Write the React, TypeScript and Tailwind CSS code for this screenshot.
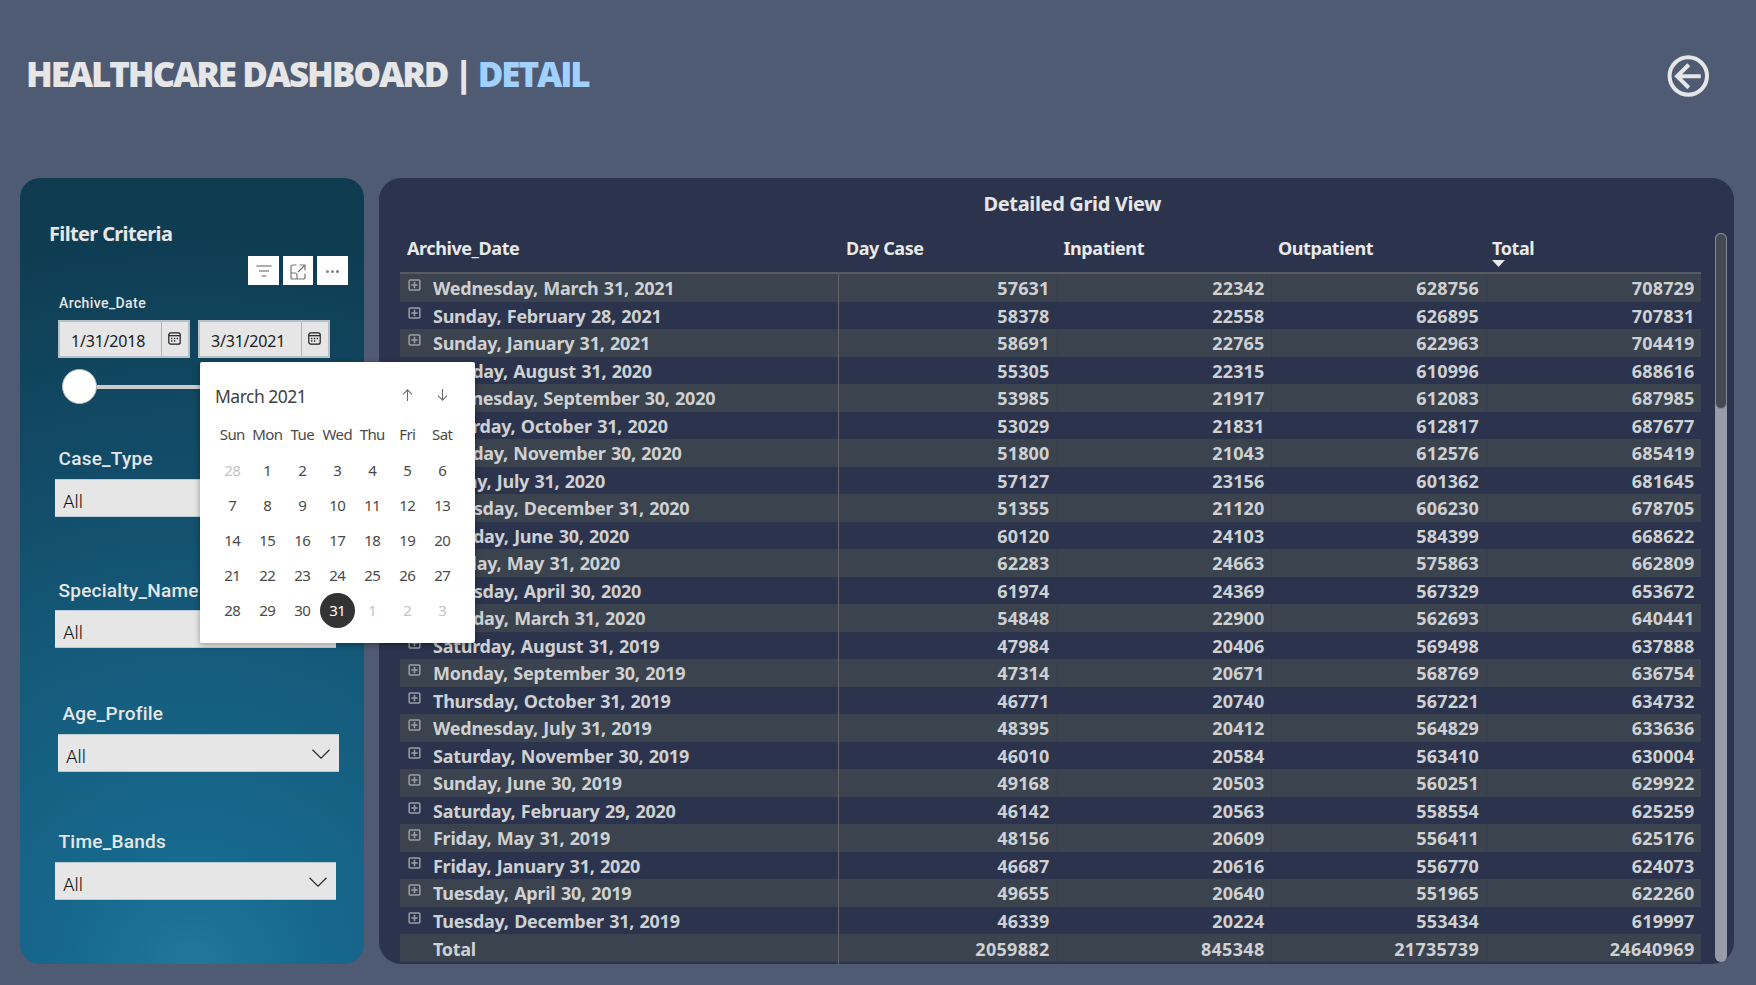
const rows: [string, string, string, string, string][] = [
  ["Wednesday, March 31, 2021", "57631", "22342", "628756", "708729"],
  ["Sunday, February 28, 2021", "58378", "22558", "626895", "707831"],
  ["Sunday, January 31, 2021", "58691", "22765", "622963", "704419"],
  ["Monday, August 31, 2020", "55305", "22315", "610996", "688616"],
  ["Wednesday, September 30, 2020", "53985", "21917", "612083", "687985"],
  ["Saturday, October 31, 2020", "53029", "21831", "612817", "687677"],
  ["Monday, November 30, 2020", "51800", "21043", "612576", "685419"],
  ["Friday, July 31, 2020", "57127", "23156", "601362", "681645"],
  ["Thursday, December 31, 2020", "51355", "21120", "606230", "678705"],
  ["Tuesday, June 30, 2020", "60120", "24103", "584399", "668622"],
  ["Sunday, May 31, 2020", "62283", "24663", "575863", "662809"],
  ["Thursday, April 30, 2020", "61974", "24369", "567329", "653672"],
  ["Tuesday, March 31, 2020", "54848", "22900", "562693", "640441"],
  ["Saturday, August 31, 2019", "47984", "20406", "569498", "637888"],
  ["Monday, September 30, 2019", "47314", "20671", "568769", "636754"],
  ["Thursday, October 31, 2019", "46771", "20740", "567221", "634732"],
  ["Wednesday, July 31, 2019", "48395", "20412", "564829", "633636"],
  ["Saturday, November 30, 2019", "46010", "20584", "563410", "630004"],
  ["Sunday, June 30, 2019", "49168", "20503", "560251", "629922"],
  ["Saturday, February 29, 2020", "46142", "20563", "558554", "625259"],
  ["Friday, May 31, 2019", "48156", "20609", "556411", "625176"],
  ["Friday, January 31, 2020", "46687", "20616", "556770", "624073"],
  ["Tuesday, April 30, 2019", "49655", "20640", "551965", "622260"],
  ["Tuesday, December 31, 2019", "46339", "20224", "553434", "619997"],
];

const weekdays = ["Sun", "Mon", "Tue", "Wed", "Thu", "Fri", "Sat"];
const days: { n: number; out: boolean }[] = [
  { n: 28, out: true },
  ...Array.from({ length: 31 }, (_, i) => ({ n: i + 1, out: false })),
  { n: 1, out: true },
  { n: 2, out: true },
  { n: 3, out: true },
];

const gridCols = "grid grid-cols-[438px_218.5px_214.5px_214.5px_215px]";

function Expander() {
  return (
    <svg className="mt-[5px] ml-[8px] h-[12px] w-[13px] shrink-0" viewBox="0 0 13 12" fill="none" stroke="#9b9ea3" strokeWidth="1.5">
      <rect x="1.15" y="0.9" width="10.7" height="10.2" rx="1" />
      <path d="M6.5 2.8v6.4M3.3 6h6.4" />
    </svg>
  );
}

function CalendarIcon() {
  return (
    <svg className="h-[13px] w-[13px]" viewBox="0 0 13 13" fill="none" stroke="#1c1c1c" strokeWidth="1.2">
      <rect x="0.8" y="0.8" width="11.4" height="11.4" rx="2" />
      <path d="M1 3.7h11" />
      <path d="M3.1 6.5h1.3M5.9 6.5h1.3M8.7 6.5h1.3M3.1 9h1.3M5.9 9h1.3" strokeWidth="1.4" />
    </svg>
  );
}

function DateInput({ value }: { value: string }) {
  return (
    <div className="flex h-[38px] w-[132px] border-2 border-[#b5c1c7] bg-[#e6e6e6] font-['Noto_Sans',sans-serif]">
      <div className="w-[101px] pt-[2px] pl-[11px] text-[16px] leading-[34px] tracking-[-0.2px] text-[#1c1c1c]">{value}</div>
      <div className="flex flex-1 border-l border-[#a9b7be] pt-[10px] pl-[6px]">
        <CalendarIcon />
      </div>
    </div>
  );
}

function Select() {
  return (
    <div className="flex h-[38px] w-[281px] items-center justify-between border-y border-[#b9cdd5] bg-[#e6e6e6] pr-[9px] pl-[8px]">
      <span className="pt-[7px] font-['Roboto',sans-serif] text-[18.5px] leading-6 font-light text-[#101010]">All</span>
      <svg className="mt-px h-[10px] w-[18px]" viewBox="0 0 18 10" fill="none" stroke="#2b2b2b" strokeWidth="1.2">
        <path d="M0.5 0.8L9 9.2L17.5 0.8" />
      </svg>
    </div>
  );
}

function Label({ children }: { children: string }) {
  return (
    <div className="h-6 font-['Roboto',sans-serif] text-[19px] leading-[26px] font-medium tracking-[0.25px] text-[#e6e6e6]">{children}</div>
  );
}

function FilterPanel() {
  return (
    <aside className="h-[786px] w-[344px] rounded-[20px] bg-[radial-gradient(circle_at_50%_101%,#24789e_0px,#1b6f95_65px,#17688d_130px,#155d7e_300px,#124b67_520px,#0e3b4f_770px)]">
      <h2 className="mt-[41px] ml-[29px] h-7 text-[20px] leading-[30px] font-bold tracking-[-0.65px] text-[#e6e6e6]">Filter Criteria</h2>
      <div className="mt-[9px] ml-[228px] flex h-[29px] gap-[4px]">
        <button className="flex w-[31px] items-center justify-center bg-white">
          <svg className="h-[12px] w-[16px]" viewBox="0 0 16 12" stroke="#5a5a5a" strokeWidth="1.2">
            <path d="M0.5 1h15M3 6h10M5.7 11h4.6" />
          </svg>
        </button>
        <button className="flex w-[30px] items-center justify-center bg-white pt-[2px]">
          <svg className="h-[16px] w-[16px]" viewBox="0 0 16 16" fill="none" stroke="#777" strokeWidth="1.2">
            <path d="M6.5 1H2.8A1.8 1.8 0 0 0 1 2.8V13A2 2 0 0 0 3 15H13A2 2 0 0 0 15 13V9.5" />
            <path d="M1 9H5A2 2 0 0 1 7 11V15M8 8L15 1M9.5 1H15V6.5" />
          </svg>
        </button>
        <button className="flex w-[31px] items-center justify-center gap-[2px] bg-white pt-px">
          <span className="size-[3px] rounded-full bg-[#888]" />
          <span className="size-[3px] rounded-full bg-[#888]" />
          <span className="size-[3px] rounded-full bg-[#777]" />
        </button>
      </div>
      <div className="mt-[7px] ml-[39px] h-5 font-['Roboto',sans-serif] text-[14px] leading-[22px] font-medium tracking-[0.4px] text-[#e6e6e6]">Archive_Date</div>
      <div className="mt-[8px] ml-[38px] flex gap-[8px]">
        <DateInput value="1/31/2018" />
        <DateInput value="3/31/2021" />
      </div>
      <div className="mt-[11px] ml-[42px] flex h-[35px] items-center">
        <div className="size-[35px] rounded-full border-[1.5px] border-[#b9b9b9] bg-white" />
        <div className="h-[4px] w-[215px] bg-[#cbcbcb]" />
      </div>
      <div className="mt-[42px] ml-[38.5px]"><Label>Case_Type</Label></div>
      <div className="mt-[9px] ml-[35px]"><Select /></div>
      <div className="mt-[61px] ml-[38.5px]"><Label>Specialty_Name</Label></div>
      <div className="mt-[8px] ml-[35px]"><Select /></div>
      <div className="mt-[53px] ml-[42.5px]"><Label>Age_Profile</Label></div>
      <div className="mt-[9px] ml-[38px]"><Select /></div>
      <div className="mt-[57px] ml-[38.5px]"><Label>Time_Bands</Label></div>
      <div className="mt-[9px] ml-[35px]"><Select /></div>
    </aside>
  );
}

function DetailGrid() {
  return (
    <section className="flex h-[786px] w-[1355px] rounded-[22px] bg-[#2b344c] pl-[21px]">
      <div className="w-[1300.5px]">
        <h2 className="mt-[10px] h-[30px] pl-[44px] text-center text-[20px] leading-[32px] font-bold tracking-[-0.35px] text-[#e6e6e6]">Detailed Grid View</h2>
        <div className={gridCols + " h-[56px] border-b-2 border-[#585b64] pt-[18px] text-[18px] leading-6 font-bold tracking-[-0.42px] text-[#e9e9e9]"}>
          <div className="pl-[7px]">Archive_Date</div>
          <div className="pl-[8px]">Day Case</div>
          <div className="pl-[7px]">Inpatient</div>
          <div className="pl-[7px]">Outpatient</div>
          <div className="pl-[6.5px]">
            Total
            <svg className="h-[7px] w-[13px]" viewBox="0 0 13 7" fill="#e9e9e9">
              <path d="M0 0h13L6.5 7z" />
            </svg>
          </div>
        </div>
        {rows.map((r, i) => (
          <div
            key={r[0]}
            className={gridCols + " h-[27.5px] text-[18px] leading-[28px] font-bold tracking-[0.15px] text-[#cfd0d2] " + (i % 2 === 0 ? "bg-[#3a434e]" : "bg-[#2b344c]")}
          >
            <div className="flex tracking-[-0.26px] whitespace-nowrap [word-spacing:1px]">
              <Expander />
              <span className="ml-[12px]">{r[0]}</span>
            </div>
            <div className="border-l-[1.5px] border-[#64656a] pr-[7px] text-right">{r[1]}</div>
            <div className="border-l border-[#2b344c]/30 pr-[6.5px] text-right">{r[2]}</div>
            <div className="border-l border-[#2b344c]/30 pr-[6.5px] text-right">{r[3]}</div>
            <div className="border-l border-[#2b344c]/30 pr-[6px] text-right">{r[4]}</div>
          </div>
        ))}
        <div className={gridCols + " h-[28px] bg-[#3a434e] text-[18px] leading-[31px] font-bold tracking-[0.3px] text-[#cfd0d2]"}>
          <div className="pl-[33px] tracking-[-0.3px]">Total</div>
          <div className="border-l-[1.5px] border-[#64656a] pr-[7px] text-right">2059882</div>
          <div className="border-l border-[#2b344c]/30 pr-[6.5px] text-right">845348</div>
          <div className="border-l border-[#2b344c]/30 pr-[6.5px] text-right">21735739</div>
          <div className="border-l border-[#2b344c]/30 pr-[6px] text-right">24640969</div>
        </div>
      </div>
      <div className="mt-[55px] ml-[14px] h-[729px] w-[12px] rounded-full bg-[#989caa]">
        <div className="h-[176px] rounded-full border border-[#868a98] bg-[#464954]" />
      </div>
    </section>
  );
}

function DatePicker() {
  return (
    <div className="absolute top-[362px] left-[200px] h-[281px] w-[275px] rounded-[2px] bg-white px-[15px] text-[#4a4a4a] shadow-[0_2px_6px_rgba(0,0,0,0.35)]">
      <div className="flex h-[56px] items-center pt-[10px]">
        <span className="w-[175px] pt-[2px] text-[17.5px] tracking-[-0.5px] text-[#3f3f3f]">March 2021</span>
        <div className="flex w-[35px] justify-center">
          <svg className="h-[12px] w-[11px]" viewBox="0 0 11 12" fill="none" stroke="#6b6b6b" strokeWidth="1.1">
            <path d="M5.5 12V1M1 5.3L5.5 0.8L10 5.3" />
          </svg>
        </div>
        <div className="flex w-[35px] justify-center">
          <svg className="h-[12px] w-[11px]" viewBox="0 0 11 12" fill="none" stroke="#6b6b6b" strokeWidth="1.1">
            <path d="M5.5 0V11M1 6.7L5.5 11.2L10 6.7" />
          </svg>
        </div>
      </div>
      <div className="grid grid-cols-7 text-center text-[15px] tracking-[-0.6px]">
        {weekdays.map((d) => (
          <div key={d} className="h-[35px] pr-[0.5px] leading-[33px]">{d}</div>
        ))}
        {days.map((d, i) => (
          <div
            key={i}
            className={
              "h-[35px] rounded-full pr-[0.5px] leading-[35px] " +
              (d.out ? "text-[#c4c4c4]" : d.n === 31 ? "bg-[#333333] text-white" : "")
            }
          >
            {d.n}
          </div>
        ))}
      </div>
    </div>
  );
}

export default function App() {
  return (
    <div className="relative h-[985px] w-[1756px] overflow-hidden bg-[#4f5b73] font-['Noto_Sans','Open_Sans',sans-serif]">
      <header className="flex h-[178px] justify-between pr-[47px] pl-[26px]">
        <h1 className="mt-[49px] h-[50px] font-['Open_Sans',sans-serif] text-[35px] leading-[50px] font-extrabold tracking-[-2.15px] whitespace-pre text-[#e6e6e6] [word-spacing:0.5px]">
          HEALTHCARE DASHBOARD | <span className="text-[#a0d1ff]">DETAIL</span>
        </h1>
        <svg className="mt-[55px] h-[42px] w-[42px]" viewBox="0 0 42 42" fill="none" stroke="#e6e6e6" strokeWidth="4">
          <circle cx="21.3" cy="21" r="18.7" />
          <path d="M33.8 21.3H9.8M21.8 9.8L10.1 21.3L21.8 32.8" />
        </svg>
      </header>
      <main className="flex gap-[15px] pl-[20px]">
        <FilterPanel />
        <DetailGrid />
      </main>
      <DatePicker />
    </div>
  );
}
